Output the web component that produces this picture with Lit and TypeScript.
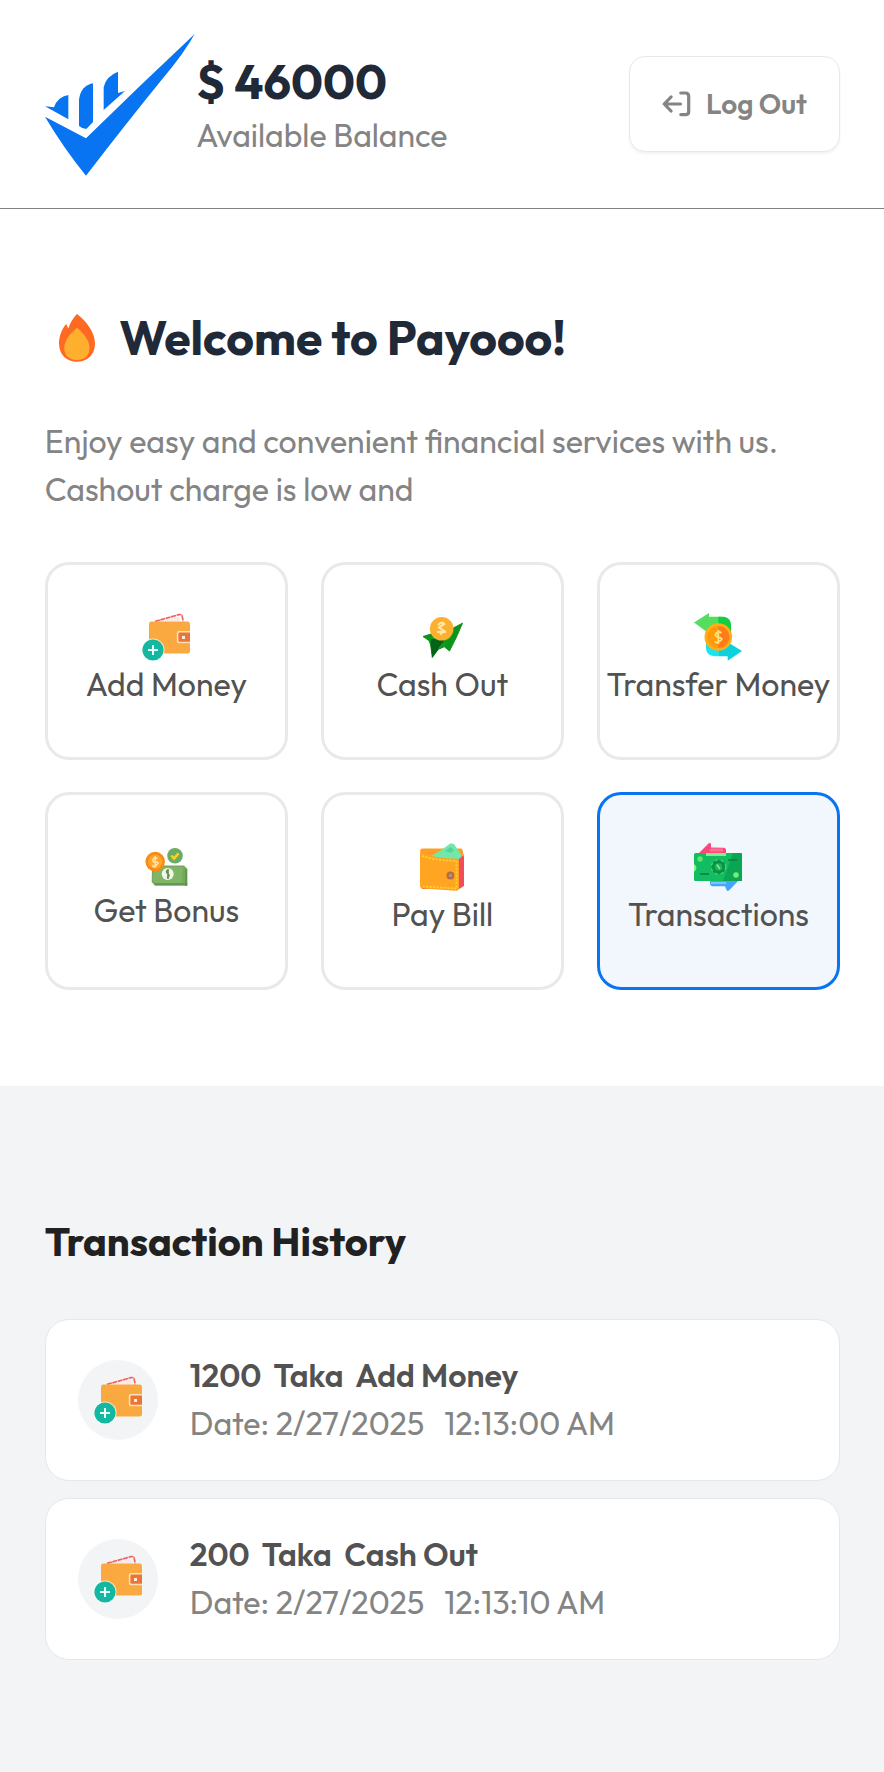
import { LitElement, html, css, svg } from "lit";
import { customElement } from "lit/decorators.js";

type Drawing = ReturnType<typeof svg>;

interface Action {
  label: string;
  icon: Drawing;
  small?: boolean;
  active?: boolean;
}

interface Entry {
  amount: string;
  kind: string;
  date: string;
  time: string;
}

const logo = html`<svg class="logo" viewBox="45 42 450 426" aria-hidden="true">
  <g fill="#0874f2">
    <path d="M45 290 168 355Q330 196 494 42Q462 100 400 173Q290 308 168 467Q100 383 45 290Z" />
    <path d="M45 259 72 262Q82 231 115 225V298Z" />
    <path d="M147 318V240Q152 197 189 190V306L169 327Q156 326 147 318Z" />
    <path d="M221 270V202Q227 169 264 155V219L285 213Z" />
  </g>
</svg>`;

const logoutIcon = html`<svg class="logout-icon" viewBox="0 0 29 26" fill="none" stroke="#848484" stroke-width="3.2"
  stroke-linecap="round" stroke-linejoin="round" aria-hidden="true">
  <path d="M18.5 13H2.4M9 6 2.2 13 9 20M18.8 2H23.5Q26.7 2 26.7 5.2V20.4Q26.7 23.6 23.5 23.6H18.8" />
</svg>`;

const flame = html`<svg class="flame" viewBox="0 0 36 48" aria-hidden="true">
  <path fill="#ff6a22" d="M17.9 0C25 5 36 17 36 29.5 36 41 28 47.8 18 47.8S0 41 0 29.5C0 22 3 14.5 7.2 10L9.3 14.4C11 9 14 4 17.9 0Z" />
  <path fill="#ffaf2e" d="M18 13.8C23 18 30.5 25.5 30.5 34 30.5 42 25 46 18 46S5.2 42 5.2 34C5.2 25.5 13 18 18 13.8Z" />
</svg>`;

const wallet = svg`
  <path d="M14 8.6 37 3.6 38.5 8.6Z" fill="#fbe9e8" />
  <path d="M13 8.4 37 1.6Q39.8 1 40.2 3.4L41.2 8.4" fill="none" stroke="#f0625d" stroke-width="1.7" stroke-dasharray="5 .6" />
  <rect x="7" y="8.6" width="41" height="32" rx="2.4" fill="#f9a93f" />
  <path d="M48 18H37Q34.8 18 34.8 20.2V28Q34.8 30.2 37 30.2H48Z" fill="#fde0b8" />
  <path d="M48 19.6H37.6Q36.4 19.6 36.4 20.8V27.4Q36.4 28.7 37.6 28.7H48Z" fill="#ea7537" />
  <rect x="40" y="23" width="3" height="3" fill="#ffeedd" />
  <circle cx="11" cy="37" r="11.5" fill="#fff" fill-opacity=".7" />
  <circle cx="11" cy="37" r="10.6" fill="#14b8a0" />
  <path d="M11 32V42M6 37H16" stroke="#eafffb" stroke-width="2" />`;

const cashOut = svg`
  <path d="M5 23.5 17 19.8 34 15.7 44.5 10.2 38 25 31.5 38 26.3 33.7 20.3 36.3 14.3 44.5 12.7 32 11 27.6Z" fill="#0d941b" stroke="#0d941b" stroke-width="1" stroke-linejoin="round" />
  <path d="M13 26H30L26 30 20.3 36.3 14.3 44.5 12.7 32Z" fill="#056317" />
  <path d="M21 34 35 18 26.3 33.7 20.3 36.3Z" fill="#129a22" />
  <circle cx="23.7" cy="15.8" r="11.8" fill="#fbb032" />
  <path d="M20 12Q24 8 26 11L21 14.5 26 18 22 21.5M19 19H28" fill="none" stroke="#ffe6a8" stroke-width="2.2" />`;

const transfer = svg`
  <path d="M0 9.5 15 0V3.7H27V17H17L13 19Z" fill="#55de5d" />
  <path d="M24.3 3.7H30Q37 5 37 12V20H24.3Z" fill="#12ce43" />
  <path d="M12 28H24.5V43.2H20Q12 42 12 35Z" fill="#18e5ee" />
  <path d="M24.3 30H35L48 38 33.7 47.8V43.2H24.3Z" fill="#0dd1dc" />
  <circle cx="24.3" cy="24" r="13.8" fill="#ffae17" />
  <circle cx="24.3" cy="24" r="11" fill="#ff9b0d" />
  <path d="M24.3 13A11 11 0 0 1 24.3 35Z" fill="#ff7c1b" />
  <path d="M27.5 20Q24 17.5 22 20.5T25 24.5 26 28 21 28.5M24.3 17V31" fill="none" stroke="#ffe179" stroke-width="1.9" />`;

const bonus = svg`
  <path d="M8 25 11 22.6H40L43.4 26V42.8H11L7.7 39Z" fill="#76a85d" />
  <path d="M10 24H39L37.5 40H11L8.5 37Z" fill="#80b565" />
  <path d="M11 41H43.4M42 26V43" stroke="#5a9450" stroke-width="1.6" />
  <circle cx="23.7" cy="31" r="6" fill="#f0f7e9" />
  <path d="M24.5 27Q21 28 23.8 30.6T23 34.6M24 26V36" fill="none" stroke="#678c59" stroke-width="1.7" />
  <circle cx="11.2" cy="18.6" r="9.8" fill="#fa8b12" />
  <circle cx="11.2" cy="18.6" r="7" fill="#ffa62d" />
  <path d="M13.5 15.5Q10 14 9 16.7T12 19 12.5 22 8.5 21.8M11.2 13V24.5" fill="none" stroke="#ffe5ac" stroke-width="1.5" />
  <circle cx="31" cy="12.8" r="7.8" fill="#6cab62" />
  <path d="M27.4 12.5 30 15.5 34.5 10.3" fill="none" stroke="#ffce1f" stroke-width="2.6" />`;

const bill = svg`
  <path d="M4 6H38Q46 8 46 14V43L41 46H4Z" fill="#f34e58" />
  <path d="M2 8Q2 5.4 5 5.4H43Q46 7 45 13L36 16H4Z" fill="#ff9d28" />
  <path d="M11 13.7 22 8 32.7 .3 36 1 44 13 40 17H25Z" fill="#70e8aa" />
  <path d="M27 8 32.7 4 36 7 33 10Z" fill="#55d39b" />
  <path d="M2 9.5Q20 16 38 15.6 41 15.7 41 19V45Q41 48 37.5 47.8L4.5 45.5Q2 45.2 2 42Z" fill="#ffa522" />
  <path d="M4 13Q20 18 38.5 17.8V45.6L5 43.3" fill="none" stroke="#ffce32" stroke-width="1.8" stroke-dasharray="2.2 1.3" />
  <circle cx="32.4" cy="32.5" r="3.9" fill="#c06640" />
  <circle cx="32.4" cy="32.5" r="1.7" fill="#7fa7a0" />`;

const transactions = svg`
  <path d="M4.5 10.5 15 0 17 .4V4.4L30 4.7Q32 5 32 7V14H5Z" fill="#fb4679" />
  <path d="M17 5.5H29V8.5H15Z" fill="#fd6f96" />
  <path d="M16 37V41Q16.5 43.3 19 43.3H31L33 48 35 47.6 45 37Z" fill="#45a5f9" />
  <path d="M17 40H32" stroke="#7cc4ff" stroke-width="2" />
  <rect x="0" y="10" width="48.3" height="28" rx="1.6" fill="#12bd61" />
  <path d="M39 10H46.7Q48.3 10 48.3 11.6V36.4Q48.3 38 46.7 38H29Z" fill="#0aa653" />
  <path d="M12 10H32V13H12Z" fill="#86ed8a" />
  <path d="M0 21Q5 24 0 29Z" fill="#8bf07e" />
  <circle cx="6" cy="16" r="2.7" fill="#65e36a" />
  <circle cx="42" cy="32" r="2.8" fill="#76ed70" />
  <circle cx="24.5" cy="24" r="7.2" fill="#0a9048" stroke="#45d66c" stroke-width="1.3" stroke-dasharray="3 3" />
  <circle cx="24.5" cy="24" r="3.8" fill="#20b35b" />
  <path d="M6 31H15M34 17H43" stroke="#087e3d" stroke-width="1.5" />
  <path d="M22.8 21.5 26 26" stroke="#7df08a" stroke-width="1.6" />`;

const icon = (body: Drawing, small = false) =>
  html`<svg class=${small ? "icon small" : "icon"} viewBox=${small ? "0 0 44 44" : "0 0 48 48"} aria-hidden="true">${body}</svg>`;

const actions: Action[] = [
  { label: "Add Money", icon: wallet },
  { label: "Cash Out", icon: cashOut },
  { label: "Transfer Money", icon: transfer },
  { label: "Get Bonus", icon: bonus, small: true },
  { label: "Pay Bill", icon: bill },
  { label: "Transactions", icon: transactions, active: true },
];

const entries: Entry[] = [
  { amount: "1200", kind: "Add Money", date: "2/27/2025", time: "12:13:00 AM" },
  { amount: "200", kind: "Cash Out", date: "2/27/2025", time: "12:13:10 AM" },
];

@customElement("app-root")
class AppRoot extends LitElement {
  static styles = css`
    :host {
      display: flex;
      flex-direction: column;
      min-height: 1772px;
      background: #fff;
      color: #525252;
      font: 400 32px/48px Outfit, Lato, sans-serif;
    }
    * { box-sizing: border-box; }
    h1, h2, p { margin: 0; }
    svg { display: block; flex: none; }
    header {
      display: flex;
      align-items: center;
      height: 209px;
      padding: 0 44px 0 44.8px;
      border-bottom: 1px solid #808080;
    }
    .logo { width: 150px; height: 142px; margin-top: 2px; }
    .balance { padding: 7px 0 0 1.5px; color: #848484; }
    .amount {
      margin-bottom: 6px;
      color: #1f2937;
      font-size: 48px;
      font-weight: 700;
      line-height: 48px;
    }
    .logout {
      display: flex;
      align-items: center;
      width: 211px;
      height: 96px;
      margin-left: auto;
      padding: 0 0 0 32px;
      gap: 15px;
      border: 1px solid #e8e8e8;
      border-radius: 16px;
      background: #fff;
      box-shadow: 0 2px 3px rgba(0, 0, 0, 0.05);
      color: #848484;
      font: inherit;
      font-size: 28px;
      font-weight: 600;
    }
    .logout-icon { width: 29px; height: 26px; }
    main { padding: 104px 44px 96px 44.8px; }
    .welcome {
      display: flex;
      align-items: center;
      gap: 24.4px;
      padding-left: 14px;
      color: #1f2937;
      font-size: 48px;
      font-weight: 700;
      line-height: 48px;
    }
    .flame { width: 36px; height: 48px; margin-top: 1px; margin-bottom: -1px; }
    .intro { margin: 56px 0 49px; color: #848484; }
    .grid { display: grid; grid-template-columns: repeat(3, 1fr); gap: 32px 33px; }
    .tile {
      display: flex;
      flex-direction: column;
      align-items: center;
      height: 198px;
      padding-top: 48px;
      border: 3px solid #e9e9e9;
      border-radius: 24px;
      line-height: 46px;
      white-space: nowrap;
    }
    .tile.active { border-color: #0874f2; background: #f2f7fe; }
    .icon { width: 48px; height: 48px; }
    .icon.small { width: 44px; height: 44px; }
    .history { flex: 1; padding: 125px 44px 0 44.8px; background: #f3f4f6; }
    .history h2 {
      margin-bottom: 48px;
      color: #212121;
      font-size: 40px;
      font-weight: 700;
      line-height: 60px;
    }
    .list { display: flex; flex-direction: column; gap: 17px; }
    .entry {
      display: flex;
      align-items: center;
      height: 162px;
      gap: 32px;
      padding-left: 32px;
      border: 1px solid #e5e7eb;
      border-radius: 24px;
      background: #fff;
    }
    .badge {
      display: grid;
      place-items: center;
      width: 80px;
      height: 80px;
      border-radius: 50%;
      background: #f3f4f6;
    }
    .details { padding-bottom: 2px; }
    .line { font-weight: 600; white-space: pre; }
    .line.when { color: #848484; font-weight: 400; }
  `;

  render() {
    return html`
      <header>
        ${logo}
        <div class="balance">
          <h1 class="amount">$ 46000</h1>
          <p>Available Balance</p>
        </div>
        <button class="logout">${logoutIcon}<span>Log Out</span></button>
      </header>
      <main>
        <h1 class="welcome">${flame}<span>Welcome to Payooo!</span></h1>
        <p class="intro">Enjoy easy and convenient financial services with us.<br />Cashout charge is low and</p>
        <div class="grid">
          ${actions.map(
            (a) => html`<div class="tile ${a.active ? "active" : ""}">
              ${icon(a.icon, a.small)}<span>${a.label}</span>
            </div>`
          )}
        </div>
      </main>
      <section class="history">
        <h2>Transaction History</h2>
        <div class="list">
          ${entries.map(
            (e) => html`<div class="entry">
              <div class="badge">${icon(wallet)}</div>
              <div class="details">
                <div class="line">${e.amount}  Taka  ${e.kind}</div>
                <div class="line when">Date: ${e.date}   ${e.time}</div>
              </div>
            </div>`
          )}
        </div>
      </section>
    `;
  }
}
